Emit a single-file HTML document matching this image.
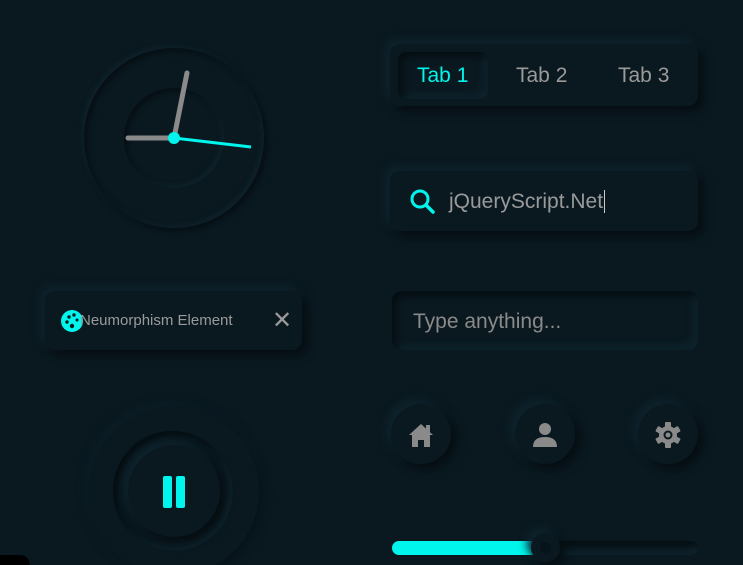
<!DOCTYPE html>
<html style="overflow:hidden;height:565px"><head><style>
body{margin:0;width:743px;height:565px;background:#0a1920;overflow:hidden;position:relative;font-family:"Liberation Sans",sans-serif}
.a{position:absolute}
.out{background:#0a1920;box-shadow:5px 5px 10px #050d11,-4px -4px 9px #102630}
.in{background:#0a1920;box-shadow:inset 4px 4px 8px #050d11,inset -4px -4px 8px #102630}
</style></head><body>
<!-- clock -->
<div class="a" style="left:84px;top:48px;width:180px;height:180px;border-radius:50%;box-shadow:3px 3px 6px #060f14,-2px -2px 5px #10242d,inset 3px 3px 6px #060f14,inset -2px -2px 5px #10242d"></div>
<div class="a" style="left:124px;top:88px;width:100px;height:100px;border-radius:50%;box-shadow:inset 3px 3px 5px #060f14,inset -2px -2px 5px #10242d"></div>
<svg class="a" style="left:0;top:0" width="743" height="565">
<line x1="174" y1="138" x2="128" y2="138" stroke="#8a8a8a" stroke-width="5" stroke-linecap="round"/>
<line x1="174" y1="138" x2="187" y2="73" stroke="#8a8a8a" stroke-width="5" stroke-linecap="round"/>
<line x1="174" y1="138" x2="251" y2="147" stroke="#00f5ec" stroke-width="3"/>
<circle cx="174" cy="138" r="6" fill="#00f5ec"/>
</svg>
<!-- tabs -->
<div class="a out" style="left:390px;top:44px;width:308px;height:62px;border-radius:10px"></div>
<div class="a in" style="left:398px;top:52px;width:90px;height:47px;border-radius:8px"></div>
<div class="a" style="left:390px;top:64px;width:308px;font-size:21px;color:#9a9a9a">
<span class="a" style="left:27px;color:#00f5ec">Tab 1</span><span class="a" style="left:126px">Tab 2</span><span class="a" style="left:228px">Tab 3</span></div>
<!-- search -->
<div class="a out" style="left:390px;top:171px;width:308px;height:60px;border-radius:10px"></div>
<svg class="a" style="left:409px;top:188px" width="28" height="28"><circle cx="11" cy="11" r="8" fill="none" stroke="#00f5ec" stroke-width="3"/><line x1="17" y1="17" x2="24" y2="24" stroke="#00f5ec" stroke-width="3.5" stroke-linecap="round"/></svg>
<div class="a" style="left:449px;top:190px;font-size:21px;color:#9a9a9a">jQueryScript.Net<span style="border-left:1px solid #ccc;margin-left:1px"></span></div>
<!-- input -->
<div class="a in" style="left:392px;top:291px;width:306px;height:59px;border-radius:10px"></div>
<div class="a" style="left:413px;top:310px;font-size:21px;color:#8a8a8a">Type anything...</div>
<!-- chip -->
<div class="a out" style="left:45px;top:291px;width:257px;height:59px;border-radius:10px"></div>
<svg class="a" style="left:60px;top:309px" width="26" height="24"><circle cx="12" cy="12" r="11" fill="#00f5ec"/><circle cx="7" cy="13" r="1.7" fill="#0a1920"/><circle cx="9" cy="8" r="1.7" fill="#0a1920"/><circle cx="14" cy="6" r="1.7" fill="#0a1920"/><circle cx="12" cy="17" r="2.2" fill="#0a1920"/><circle cx="17" cy="11" r="1.5" fill="#0a1920"/></svg>
<div class="a" style="left:80px;top:312px;font-size:15px;color:#9a9a9a">Neumorphism Element</div>
<div class="a" style="left:272px;top:306px;font-size:24px;color:#9a9a9a">✕</div>
<!-- pause -->
<div class="a" style="left:89px;top:406px;width:170px;height:170px;border-radius:50%;box-shadow:3px 3px 10px #07121a,-3px -3px 10px #0e2129"></div>
<div class="a in" style="left:113px;top:431px;width:120px;height:120px;border-radius:50%"></div>
<div class="a out" style="left:128px;top:445px;width:92px;height:92px;border-radius:50%"></div>
<div class="a" style="left:163px;top:476px;width:9px;height:32px;background:#00f5ec;border-radius:2px"></div>
<div class="a" style="left:176px;top:476px;width:9px;height:32px;background:#00f5ec;border-radius:2px"></div>
<!-- icon buttons -->
<div class="a out" style="left:391px;top:404px;width:60px;height:60px;border-radius:50%"></div>
<div class="a out" style="left:515px;top:404px;width:60px;height:60px;border-radius:50%"></div>
<div class="a out" style="left:638px;top:404px;width:60px;height:60px;border-radius:50%"></div>
<svg class="a" style="left:407px;top:421px" width="28" height="28"><path d="M2 14 L14 3 L26 14 L23 14 L23 26 L17 26 L17 19 L11 19 L11 26 L5 26 L5 14 Z" fill="#8a8a8a"/><rect x="19" y="4" width="4" height="7" fill="#8a8a8a"/></svg>
<svg class="a" style="left:531px;top:421px" width="28" height="28"><circle cx="14" cy="8" r="6" fill="#8a8a8a"/><path d="M2 26 Q2 16 14 16 Q26 16 26 26 Z" fill="#8a8a8a"/></svg>
<svg class="a" style="left:654px;top:421px" width="28" height="28"><g fill="#8a8a8a" transform="translate(14 14)"><circle r="9"/><rect x="-3" y="-13" width="6" height="26" rx="1"/><rect x="-3" y="-13" width="6" height="26" rx="1" transform="rotate(60)"/><rect x="-3" y="-13" width="6" height="26" rx="1" transform="rotate(120)"/></g><circle cx="14" cy="14" r="3.5" fill="none" stroke="#0a1920" stroke-width="2"/></svg>
<!-- slider -->
<div class="a in" style="left:392px;top:541px;width:306px;height:14px;border-radius:7px"></div>
<div class="a" style="left:392px;top:541px;width:150px;height:14px;border-radius:7px;background:#00f5ec"></div>
<div class="a out" style="left:531px;top:533px;width:29px;height:29px;border-radius:50%"></div>
<div class="a" style="left:540px;top:542px;width:11px;height:11px;border-radius:50%;background:#07131a"></div>
<div class="a" style="left:-8px;top:555px;width:38px;height:10px;border-radius:19px 19px 0 0;background:#000"></div>
</body></html>
